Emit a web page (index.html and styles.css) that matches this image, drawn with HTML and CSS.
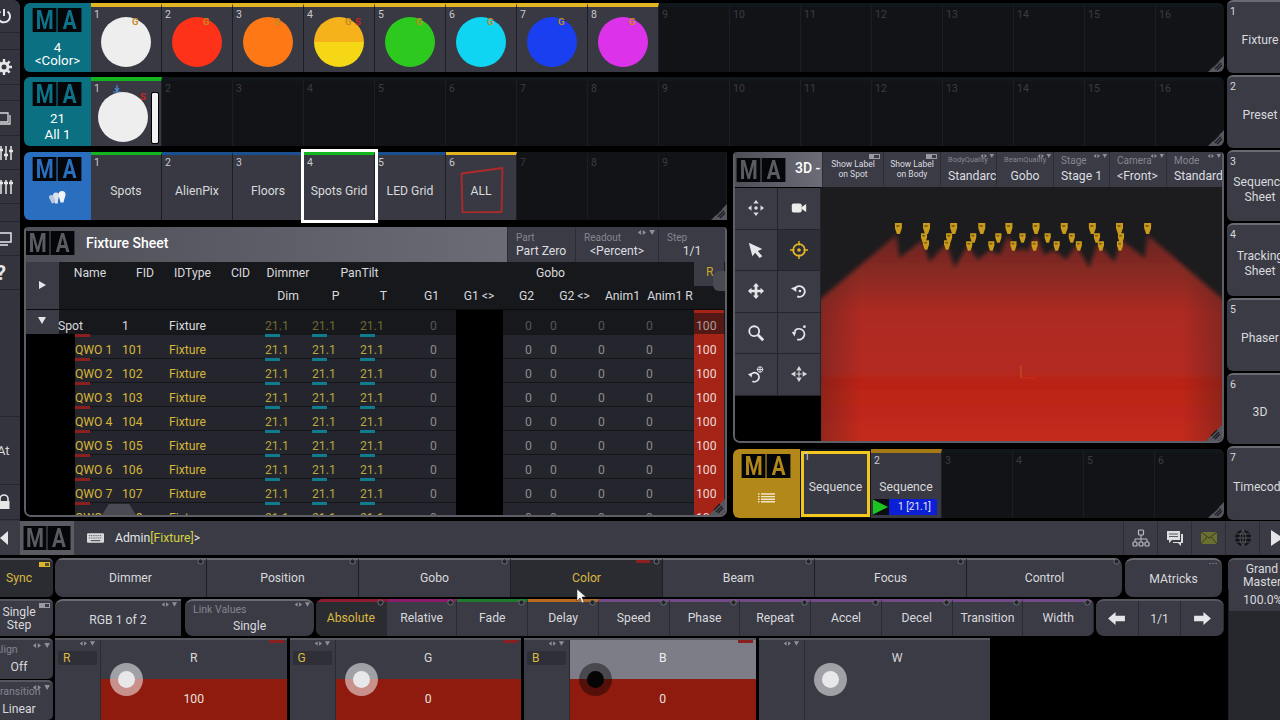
FILE: index.html
```html
<!DOCTYPE html>
<html lang="en">
<head>
<meta charset="utf-8">
<title>grandMA3 onPC</title>
<link rel="stylesheet" href="styles.css">
</head>
<body>
<svg class="defs" width="0" height="0">
  <defs>
    <symbol id="arrows" viewBox="0 0 22 6"><path d="M5 0v6L1 3zM7 0v6l4-3zM15 0h7l-3.500 6z" fill="#8d8e96"/></symbol>
    <symbol id="grip" viewBox="0 0 16 16"><path d="M16 0v16H0z" fill="#55565e"/><path d="M7 13l6-6M9 14l5-5M5 11l6-6" stroke="#18191d" stroke-width="1.200" fill="none"/></symbol>
    <symbol id="fix" viewBox="0 0 8 11"><path d="M.5 0h7v5l-2 6h-3l-2-6z" fill="#c99a1c"/><path d="M2 3h3" stroke="#3e2e08"/></symbol>
    <symbol id="ring" viewBox="0 0 8 8"><circle cx="4" cy="4" r="3" fill="#24252b" stroke="#77787f"/></symbol>
  </defs>
</svg>

<div class="top">
  <nav class="side">
    <div class="sb h33"><svg class="sico" viewBox="0 0 16 16"><path d="M4.500 3.500a6 6 0 1 0 7 0M8 1v7" fill="none" stroke="#e6e6e8" stroke-width="2"/></svg></div>
    <div class="sb h17"></div>
    <div class="sb h35"><svg class="sico" viewBox="0 0 16 16"><circle cx="8" cy="8" r="4" fill="none" stroke="#e6e6e8" stroke-width="3"/><path d="M8 0v3M8 13v3M0 8h3M13 8h3M2.300 2.300l2 2M11.700 11.700l2 2M2.300 13.700l2-2M11.700 4.300l2-2" stroke="#e6e6e8" stroke-width="2.400"/></svg></div>
    <div class="sb h16"></div>
    <div class="sb h35"><svg class="sico" viewBox="0 0 16 16"><path d="M2 3h10v9H2zM14 5v9H4" fill="none" stroke="#d8d8da" stroke-width="1.300"/></svg></div>
    <div class="sb h34"><svg class="sico s2" viewBox="0 0 16 16"><path d="M3 1v14M8 1v14M13 1v14" stroke="#e6e6e8" stroke-width="1.500"/><path d="M1 5h4M6 10h4M11 6h4" stroke="#e6e6e8" stroke-width="2.500"/></svg></div>
    <div class="sb h34"><svg class="sico s2" viewBox="0 0 16 16"><path d="M3 1v14M8 1v14M13 1v14" stroke="#e6e6e8" stroke-width="1.500"/><path d="M1 4h4M6 4h4M11 4h4" stroke="#e6e6e8" stroke-width="2.500"/></svg></div>
    <div class="sb h18"></div>
    <div class="sb h34"><svg class="sico" viewBox="0 0 16 16"><path d="M1 2h14v9H1zM4 14h8" fill="none" stroke="#e6e6e8" stroke-width="1.500"/></svg></div>
    <div class="sb h34"><span class="sq">?</span></div>
    <div class="sb h127"></div>
    <div class="sb h68"><span class="sat">At</span></div>
    <div class="sb h35"><svg class="sico" viewBox="0 0 16 16"><path d="M4 7V5a4 4 0 0 1 8 0v2" fill="none" stroke="#e6e6e8" stroke-width="1.600"/><path d="M2.500 7h11v8h-11z" fill="#e6e6e8"/></svg></div>
  </nav>

  <main class="main">
    <section class="pool pool-top">
      <div class="tile teal"><div class="ma ma-teal"><b>M</b><b>A</b></div><div class="tile-txt">4<br>&lt;Color&gt;</div></div>
      <div class="cell on ybar"><i class="n">1</i><span class="dot white"></span><em class="g g1">G</em></div>
      <div class="cell on ybar"><i class="n">2</i><span class="dot red"></span><em class="g g1">G</em></div>
      <div class="cell on ybar"><i class="n">3</i><span class="dot orange"></span><em class="g g1">G</em></div>
      <div class="cell on ybar"><i class="n">4</i><span class="dot split"></span><em class="g g2">G</em><em class="s s1">S</em></div>
      <div class="cell on ybar"><i class="n">5</i><span class="dot green"></span><em class="g g1">G</em></div>
      <div class="cell on ybar"><i class="n">6</i><span class="dot cyan"></span><em class="g g1">G</em></div>
      <div class="cell on ybar"><i class="n">7</i><span class="dot blue"></span><em class="g g1">G</em></div>
      <div class="cell on ybar"><i class="n">8</i><span class="dot magenta"></span><em class="g g1">G</em></div>
      <div class="cell"><i class="n">9</i></div><div class="cell"><i class="n">10</i></div><div class="cell"><i class="n">11</i></div><div class="cell"><i class="n">12</i></div><div class="cell"><i class="n">13</i></div><div class="cell"><i class="n">14</i></div><div class="cell"><i class="n">15</i></div><div class="cell"><i class="n">16</i></div>
      <svg class="grip"><use href="#grip"/></svg>
    </section>

    <section class="pool pool-second">
      <div class="tile teal"><div class="ma ma-teal"><b>M</b><b>A</b></div><div class="tile-txt">21<br>All 1</div></div>
      <div class="cell on gbar"><i class="n">1</i><svg class="stage" viewBox="0 0 8 8"><path d="M4 0v5M2 3l2 3 2-3M0 7h8" fill="none" stroke="#4b8fe0" stroke-width="1.100"/></svg><span class="dot white left"></span><em class="s s2">S</em><span class="level"></span></div>
      <div class="cell"><i class="n">2</i></div><div class="cell"><i class="n">3</i></div><div class="cell"><i class="n">4</i></div><div class="cell"><i class="n">5</i></div><div class="cell"><i class="n">6</i></div><div class="cell"><i class="n">7</i></div><div class="cell"><i class="n">8</i></div><div class="cell"><i class="n">9</i></div><div class="cell"><i class="n">10</i></div><div class="cell"><i class="n">11</i></div><div class="cell"><i class="n">12</i></div><div class="cell"><i class="n">13</i></div><div class="cell"><i class="n">14</i></div><div class="cell"><i class="n">15</i></div><div class="cell"><i class="n">16</i></div>
      <svg class="grip"><use href="#grip"/></svg>
    </section>

    <div class="mid">
      <div class="mid-left">
        <section class="pool pool-groups">
          <div class="tile blue-t"><div class="ma ma-blue"><b>M</b><b>A</b></div>
            <svg class="bulbs" viewBox="0 0 18 14"><path d="M0 6.500a2.300 2.300 0 0 1 4.600-.5L6 11.500l-3 1z" fill="#bcc9dc"/><path d="M4 4.500a3 3 0 0 1 6 0c0 2-1 3-1.200 8H6C6 8 4 6.500 4 4.500z" fill="#dde3ec"/><path d="M9.500 3.500a3.500 3.500 0 0 1 7 0c0 2.500-1.500 4-2 8h-3c-.5-4-2-5.500-2-8z" fill="#f2f4f8"/></svg></div>
          <div class="cell on gbar"><i class="n">1</i><span class="lbl">Spots</span></div>
          <div class="cell on bbar"><i class="n">2</i><span class="lbl">AlienPix</span></div>
          <div class="cell on bbar"><i class="n">3</i><span class="lbl">Floors</span></div>
          <div class="cell on gbar sel"><i class="n">4</i><span class="lbl">Spots Grid</span></div>
          <div class="cell on bbar"><i class="n">5</i><span class="lbl">LED Grid</span></div>
          <div class="cell on ybar"><i class="n">6</i><svg class="allbox" viewBox="0 0 44 46"><path d="M1.500 6.500L42.500 1 41.500 45 2.500 45.500z" fill="none" stroke="#b02a2a" stroke-width="1.800" stroke-linejoin="round"/></svg><span class="lbl">ALL</span></div>
          <div class="cell"><i class="n">7</i></div><div class="cell"><i class="n">8</i></div><div class="cell"><i class="n">9</i></div>
          <svg class="grip"><use href="#grip"/></svg>
        </section>

        <section class="sheet">
          <header class="sheet-title">
            <div class="ma ma-grey"><b>M</b><b>A</b></div>
            <h1 class="sheet-name">Fixture Sheet</h1>
            <div class="opt w68"><small>Part</small><span>Part Zero</span></div>
            <div class="opt w83"><small>Readout</small><span>&lt;Percent&gt;</span><svg class="tag"><use href="#arrows"/></svg></div>
            <div class="opt w69"><small>Step</small><span class="ctr">1/1</span></div>
          </header>
          <div class="thead">
            <div class="th chev r2"><svg viewBox="0 0 8 8"><path d="M1 0l7 4-7 4z" fill="#e6e6e8"/></svg></div>
            <div class="th name">Name</div><div class="th">FID</div><div class="th">IDType</div><div class="th">CID</div>
            <div class="th">Dimmer</div><div class="th span2">PanTilt</div><div class="th span6">Gobo</div>
            <div class="th rcol r2"><span class="rh">R</span></div>
            <div class="th name"></div><div class="th"></div><div class="th"></div><div class="th"></div>
            <div class="th">Dim</div><div class="th">P</div><div class="th">T</div><div class="th">G1</div><div class="th">G1 &lt;&gt;</div><div class="th">G2</div><div class="th">G2 &lt;&gt;</div><div class="th">Anim1</div><div class="th">Anim1 R</div>
          </div>
          <div class="tbody">
            <div class="row spot"><div class="c chev"><svg viewBox="0 0 8 8"><path d="M0 1l4 7 4-7z" fill="#e6e6e8"/></svg></div><div class="c wname">Spot</div><div class="c">1</div><div class="c">Fixture</div><div class="c"></div><div class="c v">21.1</div><div class="c v">21.1</div><div class="c v">21.1</div><div class="c z mid0">0</div><div class="c hole"></div><div class="c z mid0">0</div><div class="c z">0</div><div class="c z">0</div><div class="c z">0</div><div class="c red">100</div></div>
            <div class="row sub"><div class="c blk"></div><div class="c nm bar-r">QWO 1</div><div class="c">101</div><div class="c">Fixture</div><div class="c"></div><div class="c v bar-t">21.1</div><div class="c v bar-t">21.1</div><div class="c v bar-t">21.1</div><div class="c z mid0">0</div><div class="c hole"></div><div class="c z mid0">0</div><div class="c z">0</div><div class="c z">0</div><div class="c z">0</div><div class="c red">100</div></div>
            <div class="row sub"><div class="c blk"></div><div class="c nm bar-r">QWO 2</div><div class="c">102</div><div class="c">Fixture</div><div class="c"></div><div class="c v bar-t">21.1</div><div class="c v bar-t">21.1</div><div class="c v bar-t">21.1</div><div class="c z mid0">0</div><div class="c hole"></div><div class="c z mid0">0</div><div class="c z">0</div><div class="c z">0</div><div class="c z">0</div><div class="c red">100</div></div>
            <div class="row sub"><div class="c blk"></div><div class="c nm bar-r">QWO 3</div><div class="c">103</div><div class="c">Fixture</div><div class="c"></div><div class="c v bar-t">21.1</div><div class="c v bar-t">21.1</div><div class="c v bar-t">21.1</div><div class="c z mid0">0</div><div class="c hole"></div><div class="c z mid0">0</div><div class="c z">0</div><div class="c z">0</div><div class="c z">0</div><div class="c red">100</div></div>
            <div class="row sub"><div class="c blk"></div><div class="c nm bar-r">QWO 4</div><div class="c">104</div><div class="c">Fixture</div><div class="c"></div><div class="c v bar-t">21.1</div><div class="c v bar-t">21.1</div><div class="c v bar-t">21.1</div><div class="c z mid0">0</div><div class="c hole"></div><div class="c z mid0">0</div><div class="c z">0</div><div class="c z">0</div><div class="c z">0</div><div class="c red">100</div></div>
            <div class="row sub"><div class="c blk"></div><div class="c nm bar-r">QWO 5</div><div class="c">105</div><div class="c">Fixture</div><div class="c"></div><div class="c v bar-t">21.1</div><div class="c v bar-t">21.1</div><div class="c v bar-t">21.1</div><div class="c z mid0">0</div><div class="c hole"></div><div class="c z mid0">0</div><div class="c z">0</div><div class="c z">0</div><div class="c z">0</div><div class="c red">100</div></div>
            <div class="row sub"><div class="c blk"></div><div class="c nm bar-r">QWO 6</div><div class="c">106</div><div class="c">Fixture</div><div class="c"></div><div class="c v bar-t">21.1</div><div class="c v bar-t">21.1</div><div class="c v bar-t">21.1</div><div class="c z mid0">0</div><div class="c hole"></div><div class="c z mid0">0</div><div class="c z">0</div><div class="c z">0</div><div class="c z">0</div><div class="c red">100</div></div>
            <div class="row sub"><div class="c blk"></div><div class="c nm bar-r">QWO 7</div><div class="c">107</div><div class="c">Fixture</div><div class="c"></div><div class="c v bar-t">21.1</div><div class="c v bar-t">21.1</div><div class="c v bar-t">21.1</div><div class="c z mid0">0</div><div class="c hole"></div><div class="c z mid0">0</div><div class="c z">0</div><div class="c z">0</div><div class="c z">0</div><div class="c red">100</div></div>
            <div class="row sub"><div class="c blk"></div><div class="c nm bar-r">QWO 8</div><div class="c">108</div><div class="c">Fixture</div><div class="c"></div><div class="c v bar-t">21.1</div><div class="c v bar-t">21.1</div><div class="c v bar-t">21.1</div><div class="c z mid0">0</div><div class="c hole"></div><div class="c z mid0">0</div><div class="c z">0</div><div class="c z">0</div><div class="c z">0</div><div class="c red">100</div></div>
          </div>
          <div class="hscroll"></div>
          <div class="vscroll"></div>
          <svg class="grip"><use href="#grip"/></svg>
        </section>
      </div>

      <div class="mid-right">
        <section class="view3d">
          <header class="v-title">
            <div class="v-head"><div class="ma ma-grey"><b>M</b><b>A</b></div><span class="v-name">3D -</span></div>
            <div class="vb w61 sm"><span>Show Label<br>on Spot</span><i class="tog"></i></div>
            <div class="vb w57 sm"><span>Show Label<br>on Body</span><i class="tog"></i></div>
            <div class="vb w56"><small class="xs">BodyQuality</small><span>Standarc</span><svg class="tag"><use href="#arrows"/></svg></div>
            <div class="vb w57"><small class="xs">BeamQuality</small><span class="ctr">Gobo</span><svg class="tag"><use href="#arrows"/></svg></div>
            <div class="vb w56"><small>Stage</small><span>Stage 1</span><svg class="tag"><use href="#arrows"/></svg></div>
            <div class="vb w57"><small>Camera</small><span>&lt;Front&gt;</span><svg class="tag"><use href="#arrows"/></svg></div>
            <div class="vb w57"><small>Mode</small><span>Standard</span><svg class="tag"><use href="#arrows"/></svg></div>
          </header>
          <div class="v-body">
            <div class="tools">
              <div class="tool"><svg viewBox="0 0 20 20"><path d="M10 1l3 4H7zM10 19l-3-4h6zM1 10l4-3v6zM19 10l-4 3V7z" fill="#d8d9dc"/><circle cx="10" cy="10" r="2" fill="#d8d9dc"/></svg></div>
              <div class="tool"><svg viewBox="0 0 20 20"><rect x="2" y="5" width="11" height="10" rx="2" fill="#eceded"/><path d="M13 9l5-3.500v9L13 11z" fill="#eceded"/></svg></div>
              <div class="tool"><svg viewBox="0 0 20 20"><path d="M2 2l15 7-5 2 5 6-3 2-5-6-3 4z" fill="#e6e7ea"/></svg></div>
              <div class="tool dark"><svg viewBox="0 0 20 20"><circle cx="10" cy="10" r="6.500" fill="none" stroke="#e3b627" stroke-width="2"/><circle cx="10" cy="10" r="2" fill="#e3b627"/><path d="M10 0v5M10 15v5M0 10h5M15 10h5" stroke="#e3b627" stroke-width="1.600"/></svg></div>
              <div class="tool"><svg viewBox="0 0 20 20"><path d="M10 1l3.500 4H11.500v3.500H15V6.500l4 3.500-4 3.500v-2h-3.500V15h2L10 19l-3.500-4h2v-3.500H5v2L1 10l4-3.500v2h3.500V5h-2z" fill="#e4e5e8"/></svg></div>
              <div class="tool"><svg viewBox="0 0 20 20"><path d="M5 8a6 6 0 1 1 3 8" fill="none" stroke="#e4e5e8" stroke-width="2"/><path d="M1 7l6-2v6z" fill="#e4e5e8"/><circle cx="11" cy="10" r="1.500" fill="#e4e5e8"/></svg></div>
              <div class="tool"><svg viewBox="0 0 20 20"><circle cx="8" cy="8" r="5.500" fill="none" stroke="#e6e7ea" stroke-width="2"/><path d="M12 12l6 6" stroke="#e6e7ea" stroke-width="3"/></svg></div>
              <div class="tool"><svg viewBox="0 0 20 20"><path d="M15 8a6 6 0 1 0-3 9" fill="none" stroke="#e4e5e8" stroke-width="2" transform="matrix(-1 0 0 1 20 0)"/><path d="M2 9l5-1-2 6z" fill="#e4e5e8"/><circle cx="16" cy="3" r="1.500" fill="#e4e5e8"/></svg></div>
              <div class="tool"><svg viewBox="0 0 20 20"><path d="M4 11a5 5 0 1 1 2 7" fill="none" stroke="#e4e5e8" stroke-width="2"/><path d="M1 10l5-1-1 5z" fill="#e4e5e8"/><path d="M11 5h7M14.500 1.500v7" stroke="#e4e5e8"/><circle cx="14.500" cy="5" r="3" fill="none" stroke="#e4e5e8"/></svg></div>
              <div class="tool"><svg viewBox="0 0 20 20"><path d="M10 1l3 5H7zM10 19l-3-5h6zM1 10l5-3v6zM19 10l-5 3V7z" fill="#d8d9dc"/><path d="M10 7v6M7 10h6" stroke="#d8d9dc" stroke-width="1.300"/></svg></div>
            </div>
            <div class="canvas">
              <svg class="stage3d" viewBox="0 0 399 254" preserveAspectRatio="none">
                <defs>
                  <linearGradient id="beam" x1="0" y1="0" x2="0" y2="1"><stop offset="0" stop-color="#6a2622"/><stop offset=".2" stop-color="#8c2a24"/><stop offset=".36" stop-color="#ac2c24"/><stop offset=".66" stop-color="#b42c22"/><stop offset=".67" stop-color="#b92315"/><stop offset="1" stop-color="#c42c20"/></linearGradient>
                  <linearGradient id="edge" x1="0" y1="0" x2="1" y2="0"><stop offset="0" stop-color="#1c1c1e" stop-opacity=".28"/><stop offset=".1" stop-color="#1c1c1e" stop-opacity="0"/><stop offset=".9" stop-color="#1c1c1e" stop-opacity="0"/><stop offset="1" stop-color="#1c1c1e" stop-opacity=".28"/></linearGradient>
                  <filter id="soft"><feGaussianBlur stdDeviation="2"/></filter>
                </defs>
                <rect width="399" height="254" fill="#1c1c1e"/>
                <path filter="url(#soft)" fill="url(#beam)" d="M-3 114L75 48L78 71L101 53L108 75L125 56L133 81L146 58L156 73L168 63L178 68L186 48L195 65L200 61L205 65L214 48L222 68L232 63L244 73L254 58L267 81L275 56L292 75L299 53L322 71L325 48L402 114V260H-3z"/>
                <rect width="399" height="254" fill="url(#edge)"/>
                <g class="spots">
                  <use href="#fix" x="73" y="36" width="8" height="11"/><use href="#fix" x="101" y="36" width="8" height="11"/><use href="#fix" x="128" y="36" width="8" height="11"/><use href="#fix" x="156" y="36" width="8" height="11"/><use href="#fix" x="183" y="36" width="8" height="11"/><use href="#fix" x="210" y="36" width="8" height="11"/><use href="#fix" x="238" y="36" width="8" height="11"/><use href="#fix" x="266" y="36" width="8" height="11"/><use href="#fix" x="293" y="36" width="8" height="11"/><use href="#fix" x="321" y="36" width="8" height="11"/>
                  <use href="#fix" x="99" y="46" width="7" height="10"/><use href="#fix" x="101" y="53" width="7" height="10"/><use href="#fix" x="124" y="46" width="7" height="10"/><use href="#fix" x="122" y="53" width="7" height="10"/><use href="#fix" x="148" y="46" width="7" height="10"/><use href="#fix" x="144" y="54" width="7" height="10"/><use href="#fix" x="173" y="46" width="7" height="10"/><use href="#fix" x="166" y="54" width="7" height="10"/><use href="#fix" x="197" y="46" width="7" height="10"/><use href="#fix" x="188" y="54" width="7" height="10"/><use href="#fix" x="209" y="54" width="7" height="10"/><use href="#fix" x="222" y="46" width="7" height="10"/><use href="#fix" x="231" y="54" width="7" height="10"/><use href="#fix" x="246" y="46" width="7" height="10"/><use href="#fix" x="253" y="54" width="7" height="10"/><use href="#fix" x="271" y="46" width="7" height="10"/><use href="#fix" x="275" y="54" width="7" height="10"/><use href="#fix" x="295" y="46" width="7" height="10"/><use href="#fix" x="294" y="54" width="7" height="10"/>
                </g>
                <path d="M199 178v13" stroke="#c8661c" stroke-width=".8" fill="none"/><path d="M199 191h14" stroke="#e03018" stroke-width=".8" fill="none"/>
              </svg>
              <svg class="grip"><use href="#grip"/></svg>
            </div>
          </div>
        </section>

        <section class="pool pool-seq">
          <div class="tile gold"><div class="ma ma-gold"><b>M</b><b>A</b></div>
            <svg class="listic" viewBox="0 0 17 10"><path d="M0 1h1.500M3 1h14M0 3.600h1.500M3 3.600h14M0 6.200h1.500M3 6.200h14M0 8.800h1.500M3 8.800h14" stroke="#f2e7c8" stroke-width="1.400"/></svg></div>
          <div class="cell on seq-sel"><i class="n">1</i><span class="lbl">Sequence</span></div>
          <div class="cell on obar"><i class="n">2</i><span class="lbl">Sequence</span><div class="cue"><svg class="play" viewBox="0 0 16 16"><path d="M0 0l16 8-16 8z" fill="#1bc41f"/></svg><span class="cue-txt">1 [21.1]</span></div></div>
          <div class="cell"><i class="n">3</i></div><div class="cell"><i class="n">4</i></div><div class="cell"><i class="n">5</i></div><div class="cell"><i class="n">6</i></div>
          <svg class="grip"><use href="#grip"/></svg>
        </section>
      </div>
    </div>
  </main>

  <aside class="viewbar">
    <div class="vw h73"><i>1</i><span>Fixture</span></div>
    <div class="vw h73"><i>2</i><span>Preset</span></div>
    <div class="vw h72"><i>3</i><span>Sequence<br>Sheet</span></div>
    <div class="vw h73"><i>4</i><span>Tracking<br>Sheet</span></div>
    <div class="vw h73"><i>5</i><span>Phaser</span></div>
    <div class="vw h72"><i>6</i><span>3D</span></div>
    <div class="vw h74"><i>7</i><span>Timecode</span></div>
  </aside>
</div>

<div class="cmd">
  <svg class="cmd-back" viewBox="0 0 8 14"><path d="M8 0v14L0 7z" fill="#e6e6e8"/></svg>
  <div class="cmd-ma"><div class="ma ma-cmd"><b>M</b><b>A</b></div></div>
  <svg class="kbd" viewBox="0 0 18 10"><rect width="18" height="10" rx="1" fill="#d9d9dc"/><path d="M2 2.500h14M2 5h14" stroke="#3a3b45" stroke-dasharray="1 1" stroke-width="1"/><path d="M4 7.800h10" stroke="#3a3b45"/></svg>
  <div class="prompt">Admin<span>[Fixture]</span>&gt;</div>
  <div class="cmd-ico"><svg viewBox="0 0 18 18"><path d="M9 6v3M3 13v-3h12v3M9 9v4" fill="none" stroke="#bcbdc2"/><rect x="6.500" y="1" width="5" height="5" rx="1" fill="none" stroke="#bcbdc2" stroke-width="1.200"/><rect x="1" y="13" width="4" height="4" rx="1" fill="none" stroke="#bcbdc2" stroke-width="1.200"/><rect x="7" y="13" width="4" height="4" rx="1" fill="none" stroke="#bcbdc2" stroke-width="1.200"/><rect x="13" y="13" width="4" height="4" rx="1" fill="none" stroke="#bcbdc2" stroke-width="1.200"/></svg></div>
  <div class="cmd-ico"><svg viewBox="0 0 18 18"><path d="M1 2h13v9H6l-3 3v-3H1z" fill="#dcdde0"/><path d="M15 5h2v9h-2v3l-3-3H7v-1h8z" fill="#dcdde0"/><path d="M3 5h9M3 7.500h9" stroke="#5a5b63"/></svg></div>
  <div class="cmd-ico"><svg viewBox="0 0 18 18"><rect x="1" y="3" width="16" height="12" fill="#6b7030"/><path d="M1 3l8 6 8-6M1 15l6-7M17 15l-6-7" fill="none" stroke="#3a3b20"/></svg></div>
  <div class="cmd-ico"><svg viewBox="0 0 18 18"><circle cx="9" cy="9" r="8" fill="#111216"/><path d="M9 1v16M1 9h16M2.500 5h13M2.500 13h13M9 1c-4 4-4 12 0 16M9 1c4 4 4 12 0 16" fill="none" stroke="#6a6b72" stroke-width=".7"/></svg></div>
  <div class="cmd-ico last"><svg viewBox="0 0 14 18"><path d="M1 1l12 8-12 8z" fill="#e6e6e8"/></svg></div>
</div>

<div class="bottom">
  <div class="desk">
    <div class="rowa">
      <div class="sbtn sync"><span class="shift">Sync</span><i class="tog ytog"></i></div>
      <div class="features">
        <div class="fe">Dimmer<svg class="rng"><use href="#ring"/></svg></div>
        <div class="fe">Position<svg class="rng"><use href="#ring"/></svg></div>
        <div class="fe">Gobo<svg class="rng"><use href="#ring"/></svg></div>
        <div class="fe act">Color<i class="rtag"></i><svg class="rng"><use href="#ring"/></svg></div>
        <div class="fe">Beam<svg class="rng"><use href="#ring"/></svg></div>
        <div class="fe">Focus<svg class="rng"><use href="#ring"/></svg></div>
        <div class="fe wide">Control<svg class="rng"><use href="#ring"/></svg></div>
      </div>
      <div class="matricks">MAtricks<i class="dots">•••</i></div>
    </div>
    <div class="rowb">
      <div class="sbtn step"><span class="shift">Single<br>Step</span><i class="tog"></i></div>
      <div class="rb w126">RGB 1 of 2<svg class="tag"><use href="#arrows"/></svg></div>
      <div class="rb link"><small>Link Values</small><span>Single</span><svg class="tag"><use href="#arrows"/></svg></div>
      <div class="layers">
        <div class="ly act lc0">Absolute<svg class="rng"><use href="#ring"/></svg></div>
        <div class="ly lc1">Relative<svg class="rng"><use href="#ring"/></svg></div>
        <div class="ly lc2">Fade<svg class="rng"><use href="#ring"/></svg></div>
        <div class="ly lc3">Delay<svg class="rng"><use href="#ring"/></svg></div>
        <div class="ly lc4">Speed<svg class="rng"><use href="#ring"/></svg></div>
        <div class="ly lc4">Phase<svg class="rng"><use href="#ring"/></svg></div>
        <div class="ly lc4">Repeat<svg class="rng"><use href="#ring"/></svg></div>
        <div class="ly lc4">Accel<svg class="rng"><use href="#ring"/></svg></div>
        <div class="ly lc4">Decel<svg class="rng"><use href="#ring"/></svg></div>
        <div class="ly lc4">Transition<svg class="rng"><use href="#ring"/></svg></div>
        <div class="ly lc4">Width<svg class="rng"><use href="#ring"/></svg></div>
      </div>
      <div class="pager">
        <div class="pg"><svg viewBox="0 0 18 16"><path d="M0 8l8-7v4h10v6H8v4z" fill="#e4e5e8"/></svg></div>
        <div class="pg">1/1</div>
        <div class="pg"><svg viewBox="0 0 18 16"><path d="M18 8l-8-7v4H0v6h10v4z" fill="#e4e5e8"/></svg></div>
      </div>
    </div>
    <div class="rowc">
      <div class="leftcol">
        <div class="lc-b"><small class="clip">Align</small><span>Off</span><svg class="tag"><use href="#arrows"/></svg></div>
        <div class="lc-b"><small class="clip">Transition</small><span>Linear</span><svg class="tag"><use href="#arrows"/></svg></div>
      </div>
      <div class="encs">
        <div class="enc"><div class="enc-side"><svg class="tag"><use href="#arrows"/></svg><span class="enc-tag">R</span></div><div class="enc-main"><i class="rtag2"></i><div class="ehi">R</div><div class="elo">100</div><span class="knob"></span></div></div>
        <div class="enc"><div class="enc-side"><svg class="tag"><use href="#arrows"/></svg><span class="enc-tag">G</span></div><div class="enc-main"><i class="rtag2"></i><div class="ehi">G</div><div class="elo">0</div><span class="knob"></span></div></div>
        <div class="enc"><div class="enc-side"><svg class="tag"><use href="#arrows"/></svg><span class="enc-tag">B</span></div><div class="enc-main bsel"><i class="rtag2"></i><div class="ehi">B</div><div class="elo">0</div><span class="knob"></span></div></div>
        <div class="enc"><div class="enc-side"><svg class="tag"><use href="#arrows"/></svg></div><div class="enc-main wenc"><div class="ehi">W</div><div class="elo"></div><span class="knob"></span></div></div>
      </div>
    </div>
  </div>
  <aside class="gm">
    <div class="gm-h">Grand<br>Master</div>
    <div class="gm-v">100.0%</div>
    <div class="gm-f"></div>
  </aside>
</div>

<svg class="cursor" viewBox="0 0 10 15"><path d="M1 0v12l3-3 2 5 2-1-2-5h4z" fill="#fff" stroke="#222" stroke-width=".5"/></svg>
</body>
</html>
```

FILE: styles.css
```css
* { box-sizing: border-box; }
html, body { margin: 0; padding: 0; }
body {
  width: 1280px; height: 720px; overflow: hidden; background: #000;
  font: 12.2px/16px Roboto, "Liberation Sans", sans-serif; color: #d8d9dc; position: relative;
}
.defs { position: absolute; }
i, em { font-style: normal; }
small { font-size: 10px; color: #85868d; }

.top { display: flex; height: 521px; }
.side { width: 20px; flex: none; background: #33343d; display: flex; flex-direction: column; overflow: hidden; border-radius: 0 7px 0 0; }
.sb { background: #33343d; border-bottom: 1px solid #25262c; display: flex; align-items: center; overflow: hidden; width: 20px; flex: none; }
.h33 { height: 33px; } .h17 { height: 17px; } .h35 { height: 35px; } .h16 { height: 16px; }
.h34 { height: 34px; } .h18 { height: 18px; } .h127 { height: 127px; } .h68 { height: 68px; }
.sico { width: 16px; height: 16px; margin-left: -4px; flex: none; }
.sico.s2 { margin-left: -2px; }
.sq { font-size: 20px; font-weight: 700; color: #e6e6e8; margin-left: -4px; }
.sat { font-size: 13px; margin-left: -3px; color: #d8d9dc; }

.main { width: 1200px; margin-left: 4px; padding-top: 3px; flex: none; }
.pool { display: flex; position: relative; height: 69px; overflow: hidden; border-radius: 6px; background: #121317; }
.pool-second { margin-top: 5px; }
.tile { width: 67px; flex: none; display: flex; flex-direction: column; align-items: center; padding-top: 5px; }
.teal { background: #0a7082; }
.blue-t { background: #2a6fbf; }
.gold { background: #b3881a; }
.tile-txt { color: #fff; text-align: center; font-size: 13.3px; }
.pool-top .tile-txt { line-height: 13px; margin-top: 9px; }
.pool-second .tile-txt { line-height: 15.500px; margin-top: 5px; }
.ma { display: flex; gap: 1px; width: 49px; flex: none; }
.ma b { flex: none; width: 29.300px; height: 24px; margin: 0 -2.650px; background: #05060a; text-align: center; font: 700 25px/25px Roboto, sans-serif; transform: scaleX(.82); }
.ma-teal b { color: #0c7388; }
.ma-blue b { color: #2a6fbf; }
.ma-grey b, .ma-cmd b { color: #5b5c63; }
.ma-gold b { color: #b3881a; }

.cell { width: 71px; flex: none; position: relative; border-right: 1px solid #1d1e23; border-top: 4px solid #10181c; }
.cell .n { position: absolute; left: 3px; top: 2px; font-size: 10.5px; line-height: 12px; color: #3b3c42; }
.cell.on { background: #383943; }
.cell.on .n { color: #c9cacd; }
.ybar { border-top-color: #e4b522; }
.gbar { border-top-color: #13b51f; }
.bbar { border-top-color: #1b4f8f; }
.obar { border-top-color: #a57a16; }
.dot { position: absolute; left: 10px; top: 10px; width: 50px; height: 50px; border-radius: 50%; }
.dot.left { left: 7px; top: 11px; }
.white { background: #eeeeee; } .red { background: #fe3218; } .orange { background: #fe7815; }
.split { background: linear-gradient(#f6b21b 50%, #f6d716 50%); }
.green { background: #2ec91f; } .cyan { background: #0fd5f2; } .blue { background: #1a3ff0; } .magenta { background: #dc33ea; }
.g, .s { position: absolute; top: 10px; font-size: 9.500px; font-weight: 700; line-height: 10px; }
.g { color: #c58a1f; } .s { color: #c8261c; }
.g1 { left: 41px; } .g2 { left: 41px; } .s1 { left: 51px; } .s2 { left: 49px; top: 11px; }
.stage { position: absolute; left: 22px; top: 4px; width: 8px; height: 8px; }
.level { position: absolute; left: 61px; top: 12px; width: 6px; height: 50px; background: #f2f2f2; border-radius: 1px; outline: 1px solid #000; }
.grip { position: absolute; right: 0; bottom: 0; width: 16px; height: 16px; }

.mid { display: flex; gap: 6px; margin-top: 6px; }
.mid-left { width: 703px; flex: none; }
.mid-right { width: 491px; flex: none; }
.pool-groups { height: 68px; overflow: visible; }
.pool-groups .cell { border-top-width: 3px; }
.pool-groups .cell:nth-child(n+8) { border-top-color: #121317; }
.pool-groups .cell:nth-child(n+10) { width: 68px; }
.pool-groups .tile { border-radius: 6px 0 0 6px; }
.bulbs { width: 18px; height: 14px; margin-top: 10px; }
.lbl { position: absolute; left: 0; right: 0; top: 28px; text-align: center; color: #d8d9dc; white-space: nowrap; }
.sel { outline: 3px solid #fff; z-index: 2; }
.allbox { position: absolute; left: 14px; top: 12px; width: 44px; height: 46px; }

.sheet { position: relative; margin-top: 7px; height: 290px; border: 2px solid #5d5e66; border-top: 0; border-radius: 4px 4px 7px 7px; background: #000; overflow: hidden; }
.sheet-title { display: flex; align-items: center; height: 35px; background: linear-gradient(90deg, #4e4f57, #6b6c76 70%); }
.sheet-title .ma { margin-bottom: 3px; }
.sheet-name { flex: 1; margin: 0 0 3px 11px; font-size: 14px; font-weight: 500; color: #fff; }
.opt { height: 35px; background: #3a3b45; border-left: 1px solid #2c2d34; position: relative; padding: 4px 0 0 8px; display: flex; flex-direction: column; line-height: 13px; }
.opt span { color: #dcdde0; line-height: 14px; }
.opt span.ctr { text-align: center; padding-right: 8px; }
.w68 { width: 68px; } .w83 { width: 83px; } .w69 { width: 67px; }
.w83 span { text-align: center; padding-right: 8px; }
.tag { position: absolute; right: 3px; top: 3px; width: 18px; height: 5px; }

.thead { display: grid; grid-template-columns: 33px 63px 47px 48px 48px 47px 48px 48px 48px 47px 48px 48px 48px 47px 30px; grid-auto-rows: 23.500px; background: #17181c; border-bottom: 1px solid #0b0b0d; text-align: center; color: #d8d9dc; }
.th { display: flex; align-items: center; justify-content: center; white-space: nowrap; overflow: hidden; padding: 0 1px 2px 0; }
.th.chev { grid-row: span 2; background: #3a3b45; }
.th.chev svg { width: 8px; height: 8px; }
.span2 { grid-column: span 2; }
.span6 { grid-column: span 6; }
.rcol { grid-row: span 2; grid-column: 15; grid-row-start: 1; background: #3a3b45; justify-content: flex-start; align-items: flex-start; padding: 2px 0 0 12px; }
.rh { color: #c8a22a; }
.tbody { height: 208px; overflow: hidden; }
.row { display: grid; height: 24px; grid-template-columns: 33px 63px 47px 48px 48px 47px 48px 48px 48px 47px 48px 48px 48px 47px 30px; background: #25262d; }
.row.sub { grid-template-columns: 49px 47px 47px 48px 48px 47px 48px 48px 48px 47px 48px 48px 48px 47px 30px; }
.row.spot { background: #17181c; }
.c { position: relative; padding-top: 8px; line-height: 16px; border-bottom: 1px solid #15161a; color: #c5b23f; white-space: nowrap; }
.spot .c { color: #d8d9dc; }
.sub .c { color: #d6b63a; }
.c.chev { padding: 6px 0 0 12px; background: #3a3b45; }
.c.chev svg { width: 8px; height: 8px; display: block; }
.wname { margin-left: -1px; }
.spot .v { color: #6e6a34; }
.sub .v { color: #b7a93c; }
.sub .z, .z { color: #8b8c90; }
.spot .z { color: #55565a; }
.mid0 { text-align: center; padding-left: 3px; }
.z:not(.mid0) { text-indent: -1px; }
.c.hole { background: #000; border-bottom: 0; }
.c.blk { background: #000; border-bottom: 0; }
.row .c.red { background: #a62317; color: #ecd9d6; padding-left: 2px; border-bottom-color: #6a1710; }
.spot .c.red { background: #541915; color: #a99b98; border-top: 3px solid #a62317; padding-top: 5px; }
.bar-r::before, .bar-t::before { content: ""; position: absolute; left: 0; top: 0; width: 15px; height: 3px; }
.bar-r::before { background: #8b1f20; }
.bar-t::before { background: #0d7c8f; }
.hscroll { position: absolute; left: 76px; bottom: 0; width: 34px; height: 11px; background: #4a4b52; clip-path: polygon(20% 0, 80% 0, 100% 100%, 0 100%); }
.vscroll { position: absolute; right: 0; top: 44px; width: 12px; height: 20px; background: #4a4b52; border-radius: 6px 0 0 6px; }

.view3d { height: 291px; border: 2px solid #5d5e66; border-top: 0; border-radius: 4px 4px 7px 7px; overflow: hidden; background: #000; }
.v-title { display: flex; height: 35px; }
.v-head { width: 87px; flex: none; display: flex; align-items: center; padding-left: 1px; background: linear-gradient(90deg, #4e4f57, #6b6c76); overflow: hidden; }
.v-head .ma { margin-left: 1px; }
.v-name { margin: 0 0 3px 9px; font-size: 14px; font-weight: 500; color: #fff; white-space: nowrap; }
.vb { background: #3a3b45; border-left: 1px solid #2c2d34; position: relative; padding-left: 7px; display: flex; flex-direction: column; justify-content: flex-end; padding-bottom: 3px; overflow: hidden; white-space: nowrap; flex: none; }
.vb small { line-height: 14px; }
.vb small.xs { font-size: 7.5px; line-height: 10px; margin-bottom: 3px; }
.vb span { color: #dcdde0; line-height: 16px; }
.vb span.ctr { text-align: center; padding-right: 7px; }
.vb.sm { justify-content: center; padding: 0 0 2px; text-align: center; }
.vb.sm span { font-size: 8.5px; line-height: 10px; }
.vb .tag { width: 14px; height: 4px; top: 2px; right: 2px; }
.tog { position: absolute; right: 3px; top: 2px; width: 11px; height: 5px; border: 1px solid #9a9ba2; background: linear-gradient(90deg, #9a9ba2 50%, transparent 50%); }
.w61 { width: 61px; } .w56 { width: 56px; } .w57 { width: 57px; }
.v-body { display: flex; height: 254px; }
.tools { width: 86px; flex: none; display: grid; grid-template-columns: 1fr 1fr; grid-auto-rows: 41.500px; align-content: start; background: #000; padding-top: 1px; }
.tool { background: #3a3b45; border: 1px solid #24252b; border-width: 0 1px 1px 0; display: flex; align-items: center; justify-content: center; }
.tool.dark { background: #2d2e36; }
.tool svg { width: 18px; height: 18px; }
.canvas { position: relative; flex: 1; }
.stage3d { display: block; width: 100%; height: 100%; }
.pool-seq { margin-top: 6px; height: 69px; }
.pool-seq .tile { border-radius: 6px 0 0 6px; }
.pool-seq .lbl { top: 26px; }
.listic { width: 17px; height: 10px; margin-top: 15px; }
.seq-sel { border: 3px solid #f3c81e; border-top-width: 3px; margin: 2px 1px 1px 1px; width: 69px; }
.seq-sel .n { left: 0; top: -3px; }
.seq-sel .lbl { top: 25px; left: -3px; right: -3px; }
.cue { position: absolute; left: 2px; bottom: 3px; width: 64px; height: 16px; background: #0c0d10; display: flex; }
.play { width: 15px; height: 16px; }
.cue-txt { margin-left: 1px; flex: 1; background: #0a1fd6; color: #e8e9f4; font-size: 10px; line-height: 16px; text-align: right; padding-right: 6px; }

.viewbar { margin-left: 3px; width: 53px; flex: none; display: flex; flex-direction: column; gap: 2px; overflow: hidden; }
.vw { background: #3a3b45; border-top: 2px solid #696a72; border-radius: 6px 0 0 6px; position: relative; display: flex; align-items: center; justify-content: center; width: 66px; flex: none; text-align: center; color: #d8d9dc; margin-right: -13px; }
.vw i { position: absolute; left: 3px; top: 4px; font-size: 10.5px; line-height: 12px; }
.vw span { white-space: nowrap; line-height: 15px; margin-top: 6px; }
.h73 { height: 73px; } .h72 { height: 71px; } .h74 { height: 74px; }

.cmd { display: flex; align-items: center; height: 34px; background: #3a3b45; position: relative; }
.cmd-back { width: 8px; height: 14px; flex: none; margin-right: 12px; }
.cmd-ma { width: 54px; height: 34px; background: #5b5c63; display: flex; align-items: center; justify-content: center; flex: none; }
.ma-cmd { width: 47px; }
.ma-cmd b { width: 28px; margin: 0 -2.500px; }
.kbd { width: 17px; height: 10px; margin-left: 13px; flex: none; }
.prompt { margin-left: 11px; flex: 1; color: #e4e5e8; }
.prompt span { color: #d4d43c; }
.cmd-ico { width: 34px; height: 34px; border-left: 1px solid #2c2d34; display: flex; align-items: center; justify-content: center; flex: none; }
.cmd-ico svg { width: 18px; height: 18px; }
.cmd-ico.last { width: 21px; justify-content: flex-start; padding-left: 10px; }
.cmd-ico.last svg { width: 14px; height: 18px; flex: none; }

.bottom { display: flex; height: 162px; margin-top: 3px; }
.desk { width: 1226px; flex: none; display: flex; flex-direction: column; gap: 2px; }
.rowa, .rowb, .rowc { display: flex; }
.rowa { height: 39px; }
.rowb { height: 37px; }
.rowc { height: 82px; gap: 2px; }
.sbtn { width: 53px; flex: none; background: #3a3b45; border-top: 2px solid #55565e; position: relative; display: flex; align-items: center; justify-content: center; text-align: center; line-height: 12.500px; border-radius: 0 5px 5px 0; padding-right: 15px; }
.shift { display: block; white-space: nowrap; }
.sync { background: #2b2c31; color: #d9b842; }
.tog.ytog { background: linear-gradient(90deg, #e0b52a 60%, #55503a 60%); border-color: #e0b52a; }
.features { margin-left: 2px; width: 1067px; display: flex; border-radius: 8px; overflow: hidden; background: #3a3b45; }
.fe { flex: 0 0 152px; position: relative; display: flex; align-items: center; justify-content: center; border-top: 2px solid #696a72; border-right: 1px solid #1e1f24; padding-bottom: 1px; color: #d8d9dc; }
.fe.wide { flex: 1; border-right: 0; }
.fe.act { background: #2b2c31; color: #d9b842; }
.rng { position: absolute; right: 2px; top: -2px; width: 7px; height: 7px; }
.rtag { position: absolute; right: 12px; top: 0; width: 14px; height: 3px; background: #8b1f20; }
.matricks { width: 97px; margin-left: 3px; flex: none; background: #3a3b45; border-top: 2px solid #696a72; border-radius: 8px; display: flex; align-items: center; justify-content: center; position: relative; }
.dots { position: absolute; right: 4px; top: 0; font-size: 6px; line-height: 8px; letter-spacing: 1px; color: #9a9ba2; }
.rb { background: #3a3b45; border-top: 2px solid #696a72; position: relative; flex: none; display: flex; align-items: center; justify-content: center; }
.w126 { width: 126px; margin-left: 2px; border-radius: 8px 0 0 0; padding-top: 2px; }
.link { width: 129px; margin-left: 4px; border-radius: 8px; flex-direction: column; align-items: stretch; }
.link small { padding-left: 8px; line-height: 12px; font-size: 10.5px; }
.link span { text-align: center; line-height: 14px; margin-top: 3px; }
.rb .tag { top: 1px; right: 4px; width: 16px; height: 5px; }
.layers { margin-left: 2px; width: 778px; flex: none; display: flex; background: #3a3b45; border-radius: 7px; overflow: hidden; }
.ly { flex: 1 0 0; position: relative; display: flex; align-items: center; justify-content: center; border-top: 3px solid #6e4a80; border-right: 1px solid #2a2b31; color: #d8d9dc; padding-bottom: 2px; }
.ly.act { background: #2b2c31; color: #d9b842; }
.ly .rng { top: -3px; }
.lc0 { border-top-color: #8c1c30; } .lc1 { border-top-color: #8b1c6a; } .lc2 { border-top-color: #1f7a2e; } .lc3 { border-top-color: #b96a22; } .lc4 { border-top-color: #724a85; }
.pager { margin-left: 2px; width: 128px; flex: none; display: flex; background: #3a3b45; border-top: 2px solid #55565e; border-radius: 8px; overflow: hidden; }
.pg { flex: 1; display: flex; align-items: center; justify-content: center; border-right: 1px solid #2a2b31; }
.pg svg { width: 17px; height: 15px; }
.leftcol { width: 53px; flex: none; display: flex; flex-direction: column; gap: 1px; }
.lc-b { flex: 1; background: #3a3b45; border-top: 2px solid #55565e; position: relative; display: flex; flex-direction: column; align-items: flex-start; overflow: hidden; border-radius: 0 5px 5px 0; }
.clip { font-size: 10.5px; line-height: 12px; margin: 4px 0 0 -6px; white-space: nowrap; }
.lc-b span { width: 38px; text-align: center; line-height: 16px; margin-top: 3px; }
.encs { display: flex; gap: 3px; width: 935px; }
.enc { width: 231.500px; flex: none; display: flex; background: #3a3b45; border-top: 2px solid #55565e; }
.enc-side { width: 46px; flex: none; position: relative; border-right: 1px solid #2a2b31; }
.enc-side .tag { top: 1px; right: 5px; width: 16px; height: 5px; }
.enc-tag { display: block; margin: 11px 3px 0; height: 14px; line-height: 14px; background: #2f3037; color: #d9b842; padding-left: 5px; font-size: 12px; }
.enc-main { flex: 1; position: relative; display: flex; flex-direction: column; text-align: center; }
.ehi { height: 39px; line-height: 37px; color: #d8d9dc; }
.elo { flex: 1; background: #8f1a0e; color: #e8e0de; line-height: 41px; }
.rtag2 { position: absolute; right: 3px; top: 0; width: 15px; height: 3px; background: #8b1f20; }
.knob { position: absolute; left: 9px; top: 23px; width: 33px; height: 33px; border-radius: 50%; background: rgba(255,255,255,.52); }
.knob::after { content: ""; position: absolute; left: 8px; top: 8px; width: 17px; height: 17px; border-radius: 50%; background: #e8e8ea; }
.bsel .ehi { background: #7c7d87; color: #eeeef0; }
.bsel .knob { background: rgba(0,0,0,.42); }
.bsel .knob::after { background: #050505; }
.wenc .elo { background: transparent; }

.gm { margin-left: 2px; flex: 1; display: flex; flex-direction: column; overflow: hidden; }
.gm-h { background: #3a3b45; border-top: 2px solid #55565e; height: 31px; width: 68px; text-align: center; line-height: 12.500px; padding-top: 3px; border-radius: 6px 0 0 0; }
.gm-v { background: #3a3b45; height: 22px; line-height: 22px; padding-left: 14px; border-left: 1px solid #1e1f24; white-space: nowrap; width: 62px; }
.gm-f { flex: 1; background: #27282d; border-left: 1px solid #1e1f24; }

.cursor { position: absolute; left: 576px; top: 589px; width: 10px; height: 15px; }
```
